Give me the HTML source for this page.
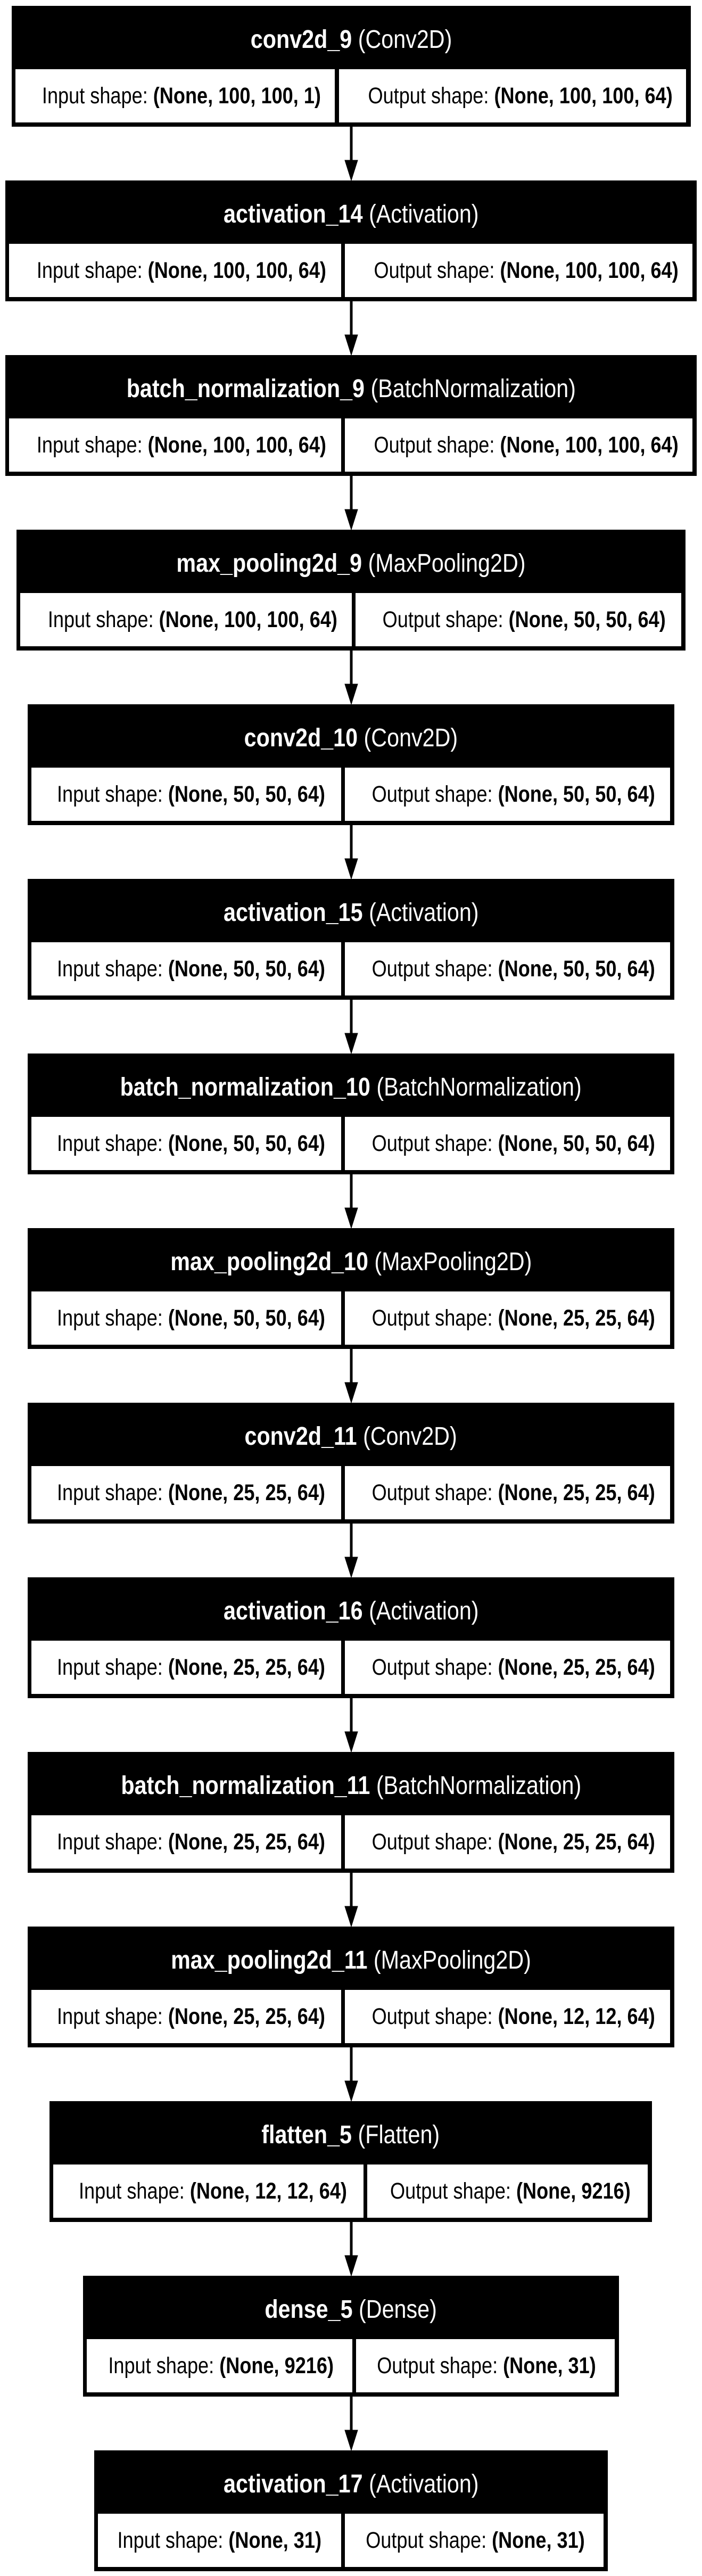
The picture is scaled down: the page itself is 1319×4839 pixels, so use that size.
<!DOCTYPE html>
<html><head><meta charset="utf-8"><style>
html,body{margin:0;padding:0;background:#fff;}
body{width:1319px;height:4839px;position:relative;overflow:hidden;font-family:"Liberation Sans",Arial,sans-serif;}
.b{position:absolute;height:227px;background:#000;}
.t{position:absolute;left:0;right:0;top:0;height:119px;line-height:128px;text-align:center;color:#fff;font-size:48px;white-space:nowrap;}
.c{position:absolute;top:119px;height:100px;line-height:100px;background:#fff;text-align:center;font-size:43px;color:#000;white-space:nowrap;}
.t span{display:inline-block;transform:scaleX(.86);}
.c span{display:inline-block;transform:scaleX(.84);}
b{font-weight:bold;}
svg{position:absolute;left:0;top:0;}
</style></head><body>
<svg width="1319" height="4839">
<g fill="#000" stroke="#000">
<line x1="660" y1="238" x2="660" y2="302" stroke-width="5"/><polygon points="648,301 672,301 660,339"/>
<line x1="660" y1="566" x2="660" y2="630" stroke-width="5"/><polygon points="648,629 672,629 660,667"/>
<line x1="660" y1="894" x2="660" y2="958" stroke-width="5"/><polygon points="648,957 672,957 660,995"/>
<line x1="660" y1="1222" x2="660" y2="1286" stroke-width="5"/><polygon points="648,1285 672,1285 660,1323"/>
<line x1="660" y1="1550" x2="660" y2="1614" stroke-width="5"/><polygon points="648,1613 672,1613 660,1651"/>
<line x1="660" y1="1878" x2="660" y2="1942" stroke-width="5"/><polygon points="648,1941 672,1941 660,1979"/>
<line x1="660" y1="2206" x2="660" y2="2270" stroke-width="5"/><polygon points="648,2269 672,2269 660,2307"/>
<line x1="660" y1="2534" x2="660" y2="2598" stroke-width="5"/><polygon points="648,2597 672,2597 660,2635"/>
<line x1="660" y1="2862" x2="660" y2="2926" stroke-width="5"/><polygon points="648,2925 672,2925 660,2963"/>
<line x1="660" y1="3190" x2="660" y2="3254" stroke-width="5"/><polygon points="648,3253 672,3253 660,3291"/>
<line x1="660" y1="3518" x2="660" y2="3582" stroke-width="5"/><polygon points="648,3581 672,3581 660,3619"/>
<line x1="660" y1="3846" x2="660" y2="3910" stroke-width="5"/><polygon points="648,3909 672,3909 660,3947"/>
<line x1="660" y1="4174" x2="660" y2="4238" stroke-width="5"/><polygon points="648,4237 672,4237 660,4275"/>
<line x1="660" y1="4502" x2="660" y2="4566" stroke-width="5"/><polygon points="648,4565 672,4565 660,4603"/>
</g></svg>

<div class="b" style="top:11px;left:22px;width:1276px"><div class="t"><span><b>conv2d_9</b> (Conv2D)</span></div>
<div class="c" style="left:7px;width:600px"><span>Input shape: <b>(None, 100, 100, 1)</b></span></div>
<div class="c" style="left:615px;width:652px"><span>Output shape: <b>(None, 100, 100, 64)</b></span></div></div>

<div class="b" style="top:339px;left:10px;width:1299px"><div class="t"><span><b>activation_14</b> (Activation)</span></div>
<div class="c" style="left:7px;width:624px"><span>Input shape: <b>(None, 100, 100, 64)</b></span></div>
<div class="c" style="left:638px;width:653px"><span>Output shape: <b>(None, 100, 100, 64)</b></span></div></div>

<div class="b" style="top:667px;left:10px;width:1299px"><div class="t"><span><b>batch_normalization_9</b> (BatchNormalization)</span></div>
<div class="c" style="left:7px;width:624px"><span>Input shape: <b>(None, 100, 100, 64)</b></span></div>
<div class="c" style="left:638px;width:653px"><span>Output shape: <b>(None, 100, 100, 64)</b></span></div></div>

<div class="b" style="top:995px;left:31px;width:1257px"><div class="t"><span><b>max_pooling2d_9</b> (MaxPooling2D)</span></div>
<div class="c" style="left:7px;width:623px"><span>Input shape: <b>(None, 100, 100, 64)</b></span></div>
<div class="c" style="left:637px;width:612px"><span>Output shape: <b>(None, 50, 50, 64)</b></span></div></div>

<div class="b" style="top:1323px;left:52px;width:1215px"><div class="t"><span><b>conv2d_10</b> (Conv2D)</span></div>
<div class="c" style="left:7px;width:582px"><span>Input shape: <b>(None, 50, 50, 64)</b></span></div>
<div class="c" style="left:596px;width:611px"><span>Output shape: <b>(None, 50, 50, 64)</b></span></div></div>

<div class="b" style="top:1651px;left:52px;width:1215px"><div class="t"><span><b>activation_15</b> (Activation)</span></div>
<div class="c" style="left:7px;width:582px"><span>Input shape: <b>(None, 50, 50, 64)</b></span></div>
<div class="c" style="left:596px;width:611px"><span>Output shape: <b>(None, 50, 50, 64)</b></span></div></div>

<div class="b" style="top:1979px;left:52px;width:1215px"><div class="t"><span><b>batch_normalization_10</b> (BatchNormalization)</span></div>
<div class="c" style="left:7px;width:582px"><span>Input shape: <b>(None, 50, 50, 64)</b></span></div>
<div class="c" style="left:596px;width:611px"><span>Output shape: <b>(None, 50, 50, 64)</b></span></div></div>

<div class="b" style="top:2307px;left:52px;width:1215px"><div class="t"><span><b>max_pooling2d_10</b> (MaxPooling2D)</span></div>
<div class="c" style="left:7px;width:582px"><span>Input shape: <b>(None, 50, 50, 64)</b></span></div>
<div class="c" style="left:596px;width:611px"><span>Output shape: <b>(None, 25, 25, 64)</b></span></div></div>

<div class="b" style="top:2635px;left:52px;width:1215px"><div class="t"><span><b>conv2d_11</b> (Conv2D)</span></div>
<div class="c" style="left:7px;width:582px"><span>Input shape: <b>(None, 25, 25, 64)</b></span></div>
<div class="c" style="left:596px;width:611px"><span>Output shape: <b>(None, 25, 25, 64)</b></span></div></div>

<div class="b" style="top:2963px;left:52px;width:1215px"><div class="t"><span><b>activation_16</b> (Activation)</span></div>
<div class="c" style="left:7px;width:582px"><span>Input shape: <b>(None, 25, 25, 64)</b></span></div>
<div class="c" style="left:596px;width:611px"><span>Output shape: <b>(None, 25, 25, 64)</b></span></div></div>

<div class="b" style="top:3291px;left:52px;width:1215px"><div class="t"><span><b>batch_normalization_11</b> (BatchNormalization)</span></div>
<div class="c" style="left:7px;width:582px"><span>Input shape: <b>(None, 25, 25, 64)</b></span></div>
<div class="c" style="left:596px;width:611px"><span>Output shape: <b>(None, 25, 25, 64)</b></span></div></div>

<div class="b" style="top:3619px;left:52px;width:1215px"><div class="t"><span><b>max_pooling2d_11</b> (MaxPooling2D)</span></div>
<div class="c" style="left:7px;width:582px"><span>Input shape: <b>(None, 25, 25, 64)</b></span></div>
<div class="c" style="left:596px;width:611px"><span>Output shape: <b>(None, 12, 12, 64)</b></span></div></div>

<div class="b" style="top:3947px;left:93px;width:1132px"><div class="t"><span><b>flatten_5</b> (Flatten)</span></div>
<div class="c" style="left:7px;width:583px"><span>Input shape: <b>(None, 12, 12, 64)</b></span></div>
<div class="c" style="left:597px;width:527px"><span>Output shape: <b>(None, 9216)</b></span></div></div>

<div class="b" style="top:4275px;left:156px;width:1007px"><div class="t"><span><b>dense_5</b> (Dense)</span></div>
<div class="c" style="left:7px;width:499px"><span>Input shape: <b>(None, 9216)</b></span></div>
<div class="c" style="left:513px;width:486px"><span>Output shape: <b>(None, 31)</b></span></div></div>

<div class="b" style="top:4603px;left:177px;width:965px"><div class="t"><span><b>activation_17</b> (Activation)</span></div>
<div class="c" style="left:7px;width:457px"><span>Input shape: <b>(None, 31)</b></span></div>
<div class="c" style="left:471px;width:486px"><span>Output shape: <b>(None, 31)</b></span></div></div>
</body></html>
